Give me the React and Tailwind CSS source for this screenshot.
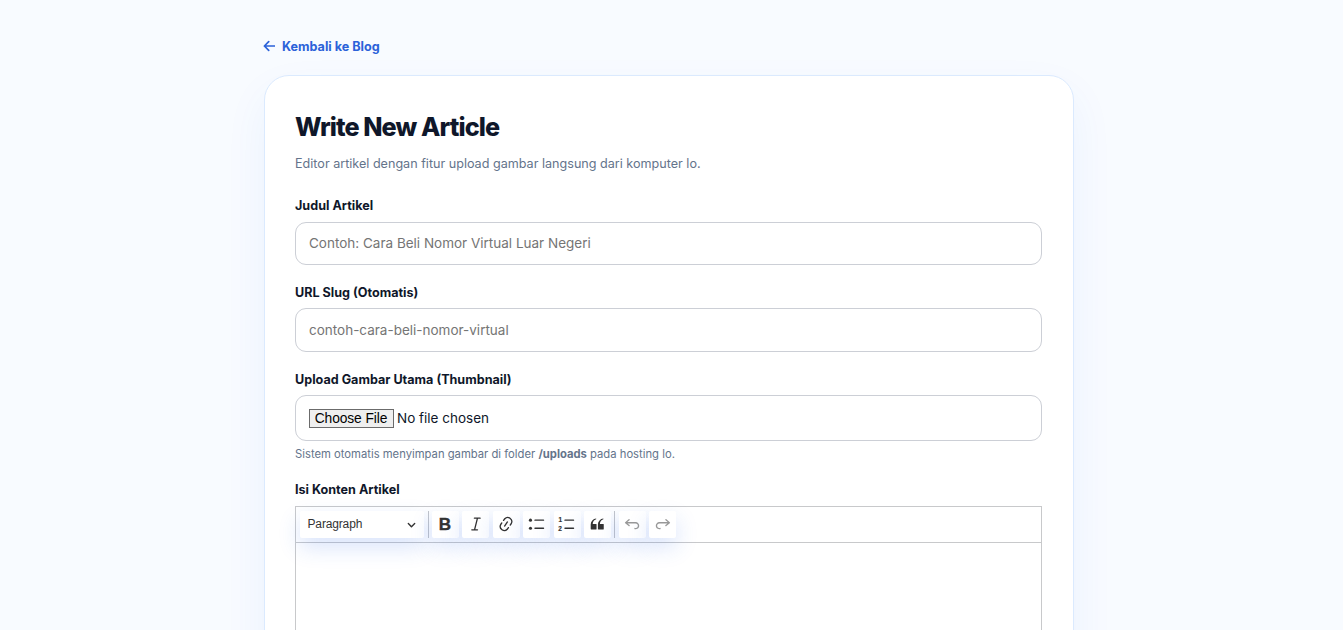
import React, { useState } from "react";

const icons = {
  link: "m11.077 15 .991-1.416a.75.75 0 1 1 1.229.86l-1.148 1.64a.748.748 0 0 1-.217.206 5.251 5.251 0 0 1-8.503-5.955.741.741 0 0 1 .12-.274l1.147-1.639a.75.75 0 1 1 1.228.86L4.933 10.7l.006.003a3.75 3.75 0 0 0 6.132 4.294l.006.004zm5.494-5.335a.748.748 0 0 1-.12.274l-1.147 1.639a.75.75 0 1 1-1.228-.86l.86-1.23a3.75 3.75 0 0 0-6.144-4.301l-.86 1.229a.75.75 0 0 1-1.229-.86l1.148-1.64a.748.748 0 0 1 .217-.206 5.251 5.251 0 0 1 8.503 5.955zm-4.563-2.532a.75.75 0 0 1 .184 1.045l-3.155 4.505a.75.75 0 1 1-1.229-.86l3.155-4.506a.75.75 0 0 1 1.045-.184z",
  quote: "M3 10.423a6.5 6.5 0 0 1 6.056-6.408l.038.67C6.448 5.423 5.354 7.663 5.22 10H9c.552 0 .5.432.5.986v4.511c0 .554-.448.503-1 .503h-5c-.552 0-.5-.449-.5-1.003v-4.574zm8 0a6.5 6.5 0 0 1 6.056-6.408l.038.67c-2.646.739-3.74 2.979-3.873 5.315H17c.552 0 .5.432.5.986v4.511c0 .554-.448.503-1 .503h-5c-.552 0-.5-.449-.5-1.003v-4.574z",
  undo: "m5.042 9.367 2.189 1.837a.75.75 0 0 1-.965 1.149l-3.788-3.18a.747.747 0 0 1-.21-.284.75.75 0 0 1 .17-.945L6.23 4.762a.75.75 0 1 1 .964 1.15L4.863 7.866h8.917A.75.75 0 0 1 14 7.9a4 4 0 1 1-1.477 7.718l.344-1.489a2.5 2.5 0 1 0 1.094-4.73l.008-.032H5.042z",
};

function Icon({ children, className = "" }) {
  return (
    <svg viewBox="0 0 20 20" fill="currentColor" className={`size-[18px] ${className}`}>
      {children}
    </svg>
  );
}

function ToolButton({ label, disabled, children }) {
  return (
    <button
      type="button"
      aria-label={label}
      disabled={disabled}
      className="relative flex size-[27px] shrink-0 items-center justify-center rounded-[2px] bg-white text-[#333] shadow-[0_9px_22px_rgba(37,99,235,0.18)]"
    >
      {children}
    </button>
  );
}

function Field({ label, className = "", children }) {
  return (
    <div className={className}>
      <label className="block h-4 text-[12.6px] leading-4 font-bold text-[#0f172a]">{label}</label>
      {children}
    </div>
  );
}

export default function App() {
  const [title, setTitle] = useState("");
  const [slug, setSlug] = useState("");

  const handleTitle = (e) => {
    const value = e.target.value;
    setTitle(value);
    setSlug(value.toLowerCase().replace(/[^a-z0-9]+/g, "-").replace(/^-|-$/g, ""));
  };

  return (
    <div className="h-[630px] overflow-hidden bg-[#f8fbff] pt-[39px] font-['Inter',sans-serif] text-[#0f172a]">
      <div className="ml-[264px] w-[810px]">
        {/* Back link */}
        <a href="#" className="flex h-4 w-fit items-center text-[12.6px] leading-4 font-bold text-[#2b62d9]">
          <svg viewBox="0 0 12 12" fill="none" stroke="currentColor" strokeWidth="1.7" strokeLinecap="round" strokeLinejoin="round" className="mr-[7px] -mt-0.5 -ml-px size-3">
            <path d="M11.4 6H1.4M5.7 1.7 1.4 6l4.3 4.3" />
          </svg>
          Kembali ke Blog
        </a>

        {/* Card */}
        <div className="mt-5 h-[700px] rounded-[25px] border border-[#dbeafe] bg-white px-[30px] pt-[35px] shadow-[0_18px_45px_rgba(37,99,235,0.06)]">
          <h1 className="h-8 text-[25.2px] leading-8 font-extrabold tracking-[-0.9px]">Write New Article</h1>
          <p className="mt-[11px] h-5 text-[12.6px] leading-5 text-[#64748b]">
            Editor artikel dengan fitur upload gambar langsung dari komputer lo.
          </p>

          <Field label="Judul Artikel" className="mt-6">
            <input
              value={title}
              onChange={handleTitle}
              placeholder="Contoh: Cara Beli Nomor Virtual Luar Negeri"
              className="mt-2 block h-[43px] w-[747px] rounded-[11px] border border-[#cccfd6] bg-white px-[13px] pb-px text-[13.5px] outline-none placeholder:text-[#757575]"
            />
          </Field>

          <Field label="URL Slug (Otomatis)" className="mt-5">
            <input
              value={slug}
              onChange={(e) => setSlug(e.target.value)}
              placeholder="contoh-cara-beli-nomor-virtual"
              className="mt-[7px] block h-11 w-[747px] rounded-[11px] border border-[#cccfd6] bg-white px-[13px] text-[13.5px] outline-none placeholder:text-[#757575]"
            />
          </Field>

          <Field label="Upload Gambar Utama (Thumbnail)" className="mt-5">
            <div className="mt-[7px] flex h-[46px] w-[747px] items-center rounded-[11px] border border-[#cccfd6] px-[13px] text-[13.5px]">
              <button
                type="button"
                className="mr-[3px] h-[19px] w-[85px] border border-[#6b6b6b] bg-[#efefef] pr-px font-['Liberation_Sans',sans-serif] text-[13.8px] leading-[17px] tracking-[-0.1px] whitespace-nowrap text-black"
              >
                Choose File
              </button>
              <span>No file chosen</span>
            </div>
            <p className="mt-[5px] h-4 text-[11.25px] leading-4 text-[#64748b]">
              Sistem otomatis menyimpan gambar di folder <strong className="font-bold">/uploads</strong> pada hosting lo.
            </p>
          </Field>

          <Field label="Isi Konten Artikel" className="mt-5">
            {/* Editor */}
            <div className="mt-2 h-[300px] w-[747px] border border-[#c8c9cb]">
              <div className="flex h-9 items-center border-b border-[#c8c9cb] pb-px pl-1 font-['Liberation_Sans',sans-serif]">
                <button
                  type="button"
                  className="relative flex h-[27px] w-[124px] shrink-0 items-center justify-between rounded-[2px] bg-white pr-2 pl-[7.5px] text-[12px] tracking-[-0.15px] text-[#333] shadow-[0_9px_22px_rgba(37,99,235,0.18)]"
                >
                  <span>Paragraph</span>
                  <svg viewBox="0 0 10 10" fill="currentColor" className="size-[9px]">
                    <path d="M.941 4.523a.75.75 0 1 1 1.06-1.06l3.006 3.005 3.005-3.005a.75.75 0 1 1 1.06 1.06l-3.549 3.55a.75.75 0 0 1-1.168-.136L.941 4.523z" />
                  </svg>
                </button>
                <span className="mr-[2.5px] ml-1 h-[27px] w-px shrink-0 bg-[#c4c6ca]" />
                <div className="flex gap-[3.5px]">
                  <ToolButton label="Bold">
                    <Icon>
                      <text x="10" y="17" textAnchor="middle" fontSize="19" fontWeight="700" stroke="currentColor" strokeWidth="0.4">B</text>
                    </Icon>
                  </ToolButton>
                  <ToolButton label="Italic">
                    <Icon>
                      <path d="M8.2 3.6h6.4M5.3 16.4h6.4M11.6 3.6 8.4 16.4" fill="none" stroke="currentColor" strokeWidth="1.4" strokeLinecap="round" />
                    </Icon>
                  </ToolButton>
                  <ToolButton label="Link">
                    <Icon><path d={icons.link} /></Icon>
                  </ToolButton>
                  <ToolButton label="Bulleted List">
                    <Icon>
                      <circle cx="2.75" cy="5.75" r="1.75" />
                      <circle cx="2.75" cy="14.75" r="1.75" />
                      <path d="M7.75 5.75h9.5M7.75 14.75h9.5" stroke="currentColor" strokeWidth="1.5" strokeLinecap="round" />
                    </Icon>
                  </ToolButton>
                  <ToolButton label="Numbered List">
                    <Icon className="overflow-visible">
                      <text x="0.6" y="8" fontSize="7.2" fontWeight="700" stroke="currentColor" strokeWidth="0.2">1</text>
                      <text x="0.3" y="18" fontSize="7.2" fontWeight="700" stroke="currentColor" strokeWidth="0.2">2</text>
                      <path d="M7.75 5.75h9.5M7.75 14.75h9.5" stroke="currentColor" strokeWidth="1.5" strokeLinecap="round" />
                    </Icon>
                  </ToolButton>
                  <ToolButton label="Block quote">
                    <Icon className="-ml-px"><path d={icons.quote} /></Icon>
                  </ToolButton>
                </div>
                <span className="mr-[3.5px] ml-[3px] h-[27px] w-px shrink-0 bg-[#c4c6ca]" />
                <div className="flex gap-[3.5px]">
                  <ToolButton label="Undo" disabled>
                    <Icon className="opacity-50"><path d={icons.undo} /></Icon>
                  </ToolButton>
                  <ToolButton label="Redo" disabled>
                    <Icon className="-scale-x-100 opacity-50"><path d={icons.undo} /></Icon>
                  </ToolButton>
                </div>
              </div>
            </div>
          </Field>
        </div>
      </div>
    </div>
  );
}
